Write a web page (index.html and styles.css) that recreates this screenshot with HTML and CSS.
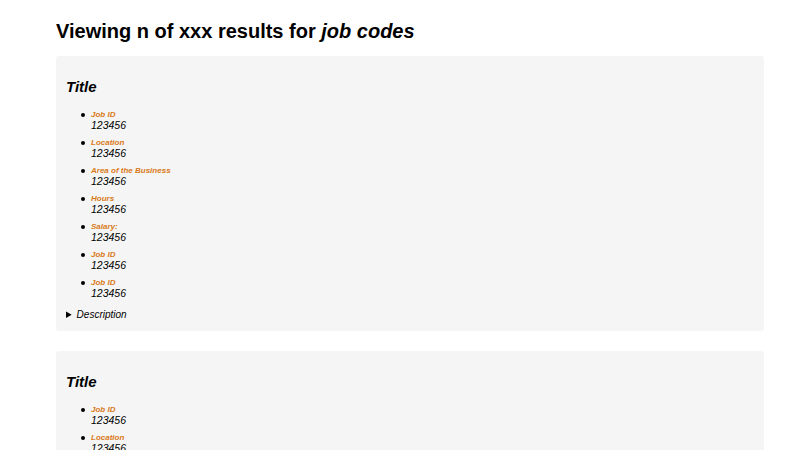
FILE: index.html
```html
<!DOCTYPE html>
<html>
<head>
<meta charset="utf-8">
<link rel="stylesheet" href="styles.css">
</head>
<body>
<main class="page">
  <h1 class="heading">Viewing n of xxx results for <em>job codes</em></h1>
  <article class="card">
    <h2 class="card-title">Title</h2>
    <ul class="fields">
      <li class="field"><span class="label">Job ID</span><span class="value">123456</span></li>
      <li class="field"><span class="label">Location</span><span class="value">123456</span></li>
      <li class="field"><span class="label">Area of the Business</span><span class="value">123456</span></li>
      <li class="field"><span class="label">Hours</span><span class="value">123456</span></li>
      <li class="field"><span class="label">Salary:</span><span class="value">123456</span></li>
      <li class="field"><span class="label">Job ID</span><span class="value">123456</span></li>
      <li class="field"><span class="label">Job ID</span><span class="value">123456</span></li>
    </ul>
    <details class="desc"><summary>Description</summary><p>Job description.</p></details>
  </article>
  <article class="card">
    <h2 class="card-title">Title</h2>
    <ul class="fields">
      <li class="field"><span class="label">Job ID</span><span class="value">123456</span></li>
      <li class="field"><span class="label">Location</span><span class="value">123456</span></li>
      <li class="field"><span class="label">Area of the Business</span><span class="value">123456</span></li>
      <li class="field"><span class="label">Hours</span><span class="value">123456</span></li>
      <li class="field"><span class="label">Salary:</span><span class="value">123456</span></li>
      <li class="field"><span class="label">Job ID</span><span class="value">123456</span></li>
      <li class="field"><span class="label">Job ID</span><span class="value">123456</span></li>
    </ul>
    <details class="desc"><summary>Description</summary><p>Job description.</p></details>
  </article>
</main>
</body>
</html>
```
FILE: styles.css
```css
html, body {
  margin: 0;
  padding: 0;
  background: #ffffff;
}
body {
  font-family: "Liberation Sans", Arial, sans-serif;
  color: #000;
}
.page {
  padding: 0 36px 0 56px;
}
.heading {
  font-size: 20px;
  line-height: 23px;
  font-weight: bold;
  margin: 20px 0 13px;
}
.heading em {
  font-style: italic;
}
.card {
  background: #f5f5f5;
  border-radius: 3px;
  padding: 10px;
  margin-bottom: 20px;
}
.card-title {
  font-size: 15px;
  line-height: 17px;
  font-style: italic;
  font-weight: bold;
  margin: 12px 0 15px;
}
.fields {
  margin: 0 0 10px;
  padding-left: 25px;
  list-style: none;
  font-size: 10px;
  line-height: 9px;
}
.field {
  position: relative;
  margin-bottom: 7px;
}
.field::before {
  content: "";
  position: absolute;
  left: -10px;
  top: 3px;
  width: 4px;
  height: 4px;
  border-radius: 50%;
  background: #000;
}
.label {
  display: block;
  font-size: 8px;
  line-height: 9px;
  font-weight: bold;
  font-style: italic;
  color: #d9791a;
}
.value {
  display: block;
  font-size: 10.5px;
  line-height: 12px;
  font-style: italic;
}
.desc summary {
  font-size: 10px;
  line-height: 12px;
  font-style: italic;
  cursor: pointer;
}
```
